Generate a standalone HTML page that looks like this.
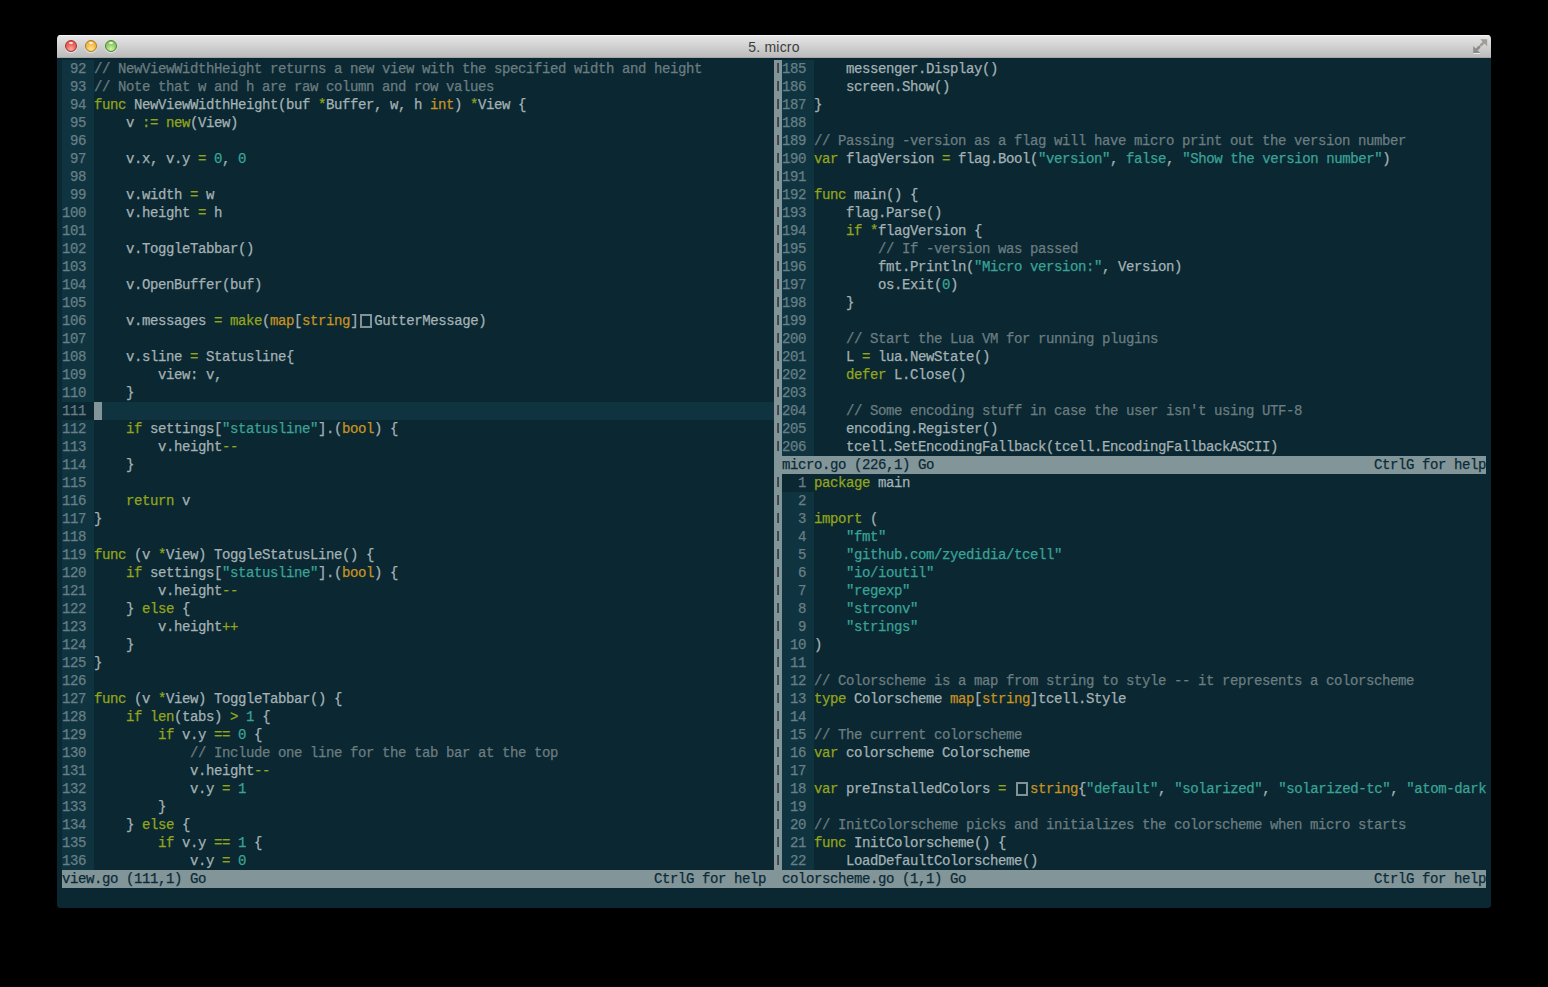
<!DOCTYPE html>
<html><head><meta charset="utf-8"><style>
html,body{margin:0;padding:0;background:#000000;width:1548px;height:987px;overflow:hidden;position:relative}
.win{position:absolute;left:57px;top:35px;width:1434px;height:873px;background:#0a2732;border-radius:4px 4px 3px 3px;overflow:hidden}
.tb{position:absolute;left:0;top:0;width:1434px;height:23px;background:linear-gradient(#e7e7e7,#d3d3d3 45%,#b9b9b9);border-top:0;}
.tb:before{content:"";position:absolute;left:0;top:0;right:0;height:1px;background:#f6f6f6}
.tb:after{content:"";position:absolute;left:0;bottom:0;right:0;height:1px;background:#a8a6a6}
.tt{position:absolute;left:0;top:4px;width:1434px;height:23px;line-height:23px;text-align:center;font:14px "Liberation Sans",sans-serif;letter-spacing:0.2px;color:#3c3c3c}
.btn{position:absolute;top:5px;width:12px;height:12px;border-radius:50%;box-sizing:border-box;border:1px solid;box-shadow:0 1px 1px rgba(255,255,255,0.6)}
.btn:after{content:"";position:absolute;left:3px;top:1px;width:4px;height:2px;border-radius:50%;background:rgba(255,255,255,0.85)}
.btn.r{left:8px;border-color:#a8342c;background:radial-gradient(circle at 50% 80%,#f7b0a8 0,#ec6a62 45%,#e04c44 100%)}
.btn.o{left:28px;border-color:#b07a1c;background:radial-gradient(circle at 50% 80%,#fbe49a 0,#f4c152 45%,#e8a83a 100%)}
.btn.gr{left:48px;border-color:#4a8a2a;background:radial-gradient(circle at 50% 80%,#d6f2b0 0,#98d070 45%,#7cbc56 100%)}
.term{position:absolute;left:0;top:0}
.g,.l,.st{position:absolute;height:18px;line-height:18px;white-space:pre;font-family:"Liberation Mono",monospace;font-size:14px;letter-spacing:-0.4013px;-webkit-text-stroke:0.25px currentColor}
.g{width:32px;background:#0f3440;color:#687f85}
.g.cg{background:#0a2732}
.l{color:#a4b2b4}
.cl{position:absolute;height:18px;background:#0f3440}
.cur{position:absolute;width:8px;height:18px;background:#82969a}
.st{background:#82969a;color:#0b2a36}
.st .r{position:absolute;right:0;top:0}
.dv{position:absolute;width:8px;background:#82969a}
.bar{position:absolute;width:2px;height:10px;background:linear-gradient(90deg,#6a4a40,#1c4462)}
i{font-style:normal}
.bx{display:inline-block;width:16px;height:18px;vertical-align:top;position:relative}
.bx:before{content:"";position:absolute;left:2px;top:2px;width:12px;height:14px;box-sizing:border-box;border:2px solid #a4b2b4;opacity:0.78}
.c{color:#6b7d80}
.s{color:#3aa396}
.k{color:#93a51c}
.t{color:#c8931f}
</style></head><body>
<div class="win">
<div class="tb"></div>
<div class="tt">5. micro</div>
<svg style="position:absolute;left:1415px;top:3px" width="16" height="16" viewBox="1472 38 16 16">
<path d="M1480.2 39.2 L1487.2 39.2 L1487.2 46.2 Z" fill="#a09c96"/>
<path d="M1484 42.2 L1481.2 45" stroke="#a09c96" stroke-width="2.6" stroke-linecap="round"/>
<path d="M1473.2 46 L1473.2 53 L1480.2 53 Z" fill="#8c8c8c"/>
<path d="M1476.4 49.8 L1479.2 47" stroke="#8c8c8c" stroke-width="2.6" stroke-linecap="round"/>
<path d="M1473.5 53.6 L1480 53.6" stroke="#ececec" stroke-width="1"/>
</svg>
<div class="btn r"></div>
<div class="btn o"></div>
<div class="btn gr"></div>
</div>
<div class="term">
<div class="g" style="left:62px;top:60px"> 92 </div>
<div class="l" style="left:94px;top:60px"><i class="c">// NewViewWidthHeight returns a new view with the specified width and height</i></div>
<div class="g" style="left:62px;top:78px"> 93 </div>
<div class="l" style="left:94px;top:78px"><i class="c">// Note that w and h are raw column and row values</i></div>
<div class="g" style="left:62px;top:96px"> 94 </div>
<div class="l" style="left:94px;top:96px"><i class="k">func</i> NewViewWidthHeight(buf <i class="k">*</i>Buffer, w, h <i class="t">int</i>) <i class="k">*</i>View {</div>
<div class="g" style="left:62px;top:114px"> 95 </div>
<div class="l" style="left:94px;top:114px">    v <i class="k">:=</i> <i class="k">new</i>(View)</div>
<div class="g" style="left:62px;top:132px"> 96 </div>
<div class="g" style="left:62px;top:150px"> 97 </div>
<div class="l" style="left:94px;top:150px">    v.x, v.y <i class="k">=</i> <i class="s">0</i>, <i class="s">0</i></div>
<div class="g" style="left:62px;top:168px"> 98 </div>
<div class="g" style="left:62px;top:186px"> 99 </div>
<div class="l" style="left:94px;top:186px">    v.width <i class="k">=</i> w</div>
<div class="g" style="left:62px;top:204px">100 </div>
<div class="l" style="left:94px;top:204px">    v.height <i class="k">=</i> h</div>
<div class="g" style="left:62px;top:222px">101 </div>
<div class="g" style="left:62px;top:240px">102 </div>
<div class="l" style="left:94px;top:240px">    v.ToggleTabbar()</div>
<div class="g" style="left:62px;top:258px">103 </div>
<div class="g" style="left:62px;top:276px">104 </div>
<div class="l" style="left:94px;top:276px">    v.OpenBuffer(buf)</div>
<div class="g" style="left:62px;top:294px">105 </div>
<div class="g" style="left:62px;top:312px">106 </div>
<div class="l" style="left:94px;top:312px">    v.messages <i class="k">=</i> <i class="k">make</i>(<i class="t">map</i>[<i class="t">string</i>]<i class="bx"></i>GutterMessage)</div>
<div class="g" style="left:62px;top:330px">107 </div>
<div class="g" style="left:62px;top:348px">108 </div>
<div class="l" style="left:94px;top:348px">    v.sline <i class="k">=</i> Statusline{</div>
<div class="g" style="left:62px;top:366px">109 </div>
<div class="l" style="left:94px;top:366px">        view: v,</div>
<div class="g" style="left:62px;top:384px">110 </div>
<div class="l" style="left:94px;top:384px">    }</div>
<div class="g cg" style="left:62px;top:402px">111 </div>
<div class="cl" style="left:94px;top:402px;width:680px"></div>
<div class="cur" style="left:94px;top:402px"></div>
<div class="g" style="left:62px;top:420px">112 </div>
<div class="l" style="left:94px;top:420px">    <i class="k">if</i> settings[<i class="s">&quot;statusline&quot;</i>].(<i class="t">bool</i>) {</div>
<div class="g" style="left:62px;top:438px">113 </div>
<div class="l" style="left:94px;top:438px">        v.height<i class="k">--</i></div>
<div class="g" style="left:62px;top:456px">114 </div>
<div class="l" style="left:94px;top:456px">    }</div>
<div class="g" style="left:62px;top:474px">115 </div>
<div class="g" style="left:62px;top:492px">116 </div>
<div class="l" style="left:94px;top:492px">    <i class="k">return</i> v</div>
<div class="g" style="left:62px;top:510px">117 </div>
<div class="l" style="left:94px;top:510px">}</div>
<div class="g" style="left:62px;top:528px">118 </div>
<div class="g" style="left:62px;top:546px">119 </div>
<div class="l" style="left:94px;top:546px"><i class="k">func</i> (v <i class="k">*</i>View) ToggleStatusLine() {</div>
<div class="g" style="left:62px;top:564px">120 </div>
<div class="l" style="left:94px;top:564px">    <i class="k">if</i> settings[<i class="s">&quot;statusline&quot;</i>].(<i class="t">bool</i>) {</div>
<div class="g" style="left:62px;top:582px">121 </div>
<div class="l" style="left:94px;top:582px">        v.height<i class="k">--</i></div>
<div class="g" style="left:62px;top:600px">122 </div>
<div class="l" style="left:94px;top:600px">    } <i class="k">else</i> {</div>
<div class="g" style="left:62px;top:618px">123 </div>
<div class="l" style="left:94px;top:618px">        v.height<i class="k">++</i></div>
<div class="g" style="left:62px;top:636px">124 </div>
<div class="l" style="left:94px;top:636px">    }</div>
<div class="g" style="left:62px;top:654px">125 </div>
<div class="l" style="left:94px;top:654px">}</div>
<div class="g" style="left:62px;top:672px">126 </div>
<div class="g" style="left:62px;top:690px">127 </div>
<div class="l" style="left:94px;top:690px"><i class="k">func</i> (v <i class="k">*</i>View) ToggleTabbar() {</div>
<div class="g" style="left:62px;top:708px">128 </div>
<div class="l" style="left:94px;top:708px">    <i class="k">if</i> <i class="k">len</i>(tabs) <i class="k">&gt;</i> <i class="s">1</i> {</div>
<div class="g" style="left:62px;top:726px">129 </div>
<div class="l" style="left:94px;top:726px">        <i class="k">if</i> v.y <i class="k">==</i> <i class="s">0</i> {</div>
<div class="g" style="left:62px;top:744px">130 </div>
<div class="l" style="left:94px;top:744px">            <i class="c">// Include one line for the tab bar at the top</i></div>
<div class="g" style="left:62px;top:762px">131 </div>
<div class="l" style="left:94px;top:762px">            v.height<i class="k">--</i></div>
<div class="g" style="left:62px;top:780px">132 </div>
<div class="l" style="left:94px;top:780px">            v.y <i class="k">=</i> <i class="s">1</i></div>
<div class="g" style="left:62px;top:798px">133 </div>
<div class="l" style="left:94px;top:798px">        }</div>
<div class="g" style="left:62px;top:816px">134 </div>
<div class="l" style="left:94px;top:816px">    } <i class="k">else</i> {</div>
<div class="g" style="left:62px;top:834px">135 </div>
<div class="l" style="left:94px;top:834px">        <i class="k">if</i> v.y <i class="k">==</i> <i class="s">1</i> {</div>
<div class="g" style="left:62px;top:852px">136 </div>
<div class="l" style="left:94px;top:852px">            v.y <i class="k">=</i> <i class="s">0</i></div>
<div class="g" style="left:782px;top:60px">185 </div>
<div class="l" style="left:814px;top:60px">    messenger.Display()</div>
<div class="g" style="left:782px;top:78px">186 </div>
<div class="l" style="left:814px;top:78px">    screen.Show()</div>
<div class="g" style="left:782px;top:96px">187 </div>
<div class="l" style="left:814px;top:96px">}</div>
<div class="g" style="left:782px;top:114px">188 </div>
<div class="g" style="left:782px;top:132px">189 </div>
<div class="l" style="left:814px;top:132px"><i class="c">// Passing -version as a flag will have micro print out the version number</i></div>
<div class="g" style="left:782px;top:150px">190 </div>
<div class="l" style="left:814px;top:150px"><i class="k">var</i> flagVersion <i class="k">=</i> flag.Bool(<i class="s">&quot;version&quot;</i>, <i class="s">false</i>, <i class="s">&quot;Show the version number&quot;</i>)</div>
<div class="g" style="left:782px;top:168px">191 </div>
<div class="g" style="left:782px;top:186px">192 </div>
<div class="l" style="left:814px;top:186px"><i class="k">func</i> main() {</div>
<div class="g" style="left:782px;top:204px">193 </div>
<div class="l" style="left:814px;top:204px">    flag.Parse()</div>
<div class="g" style="left:782px;top:222px">194 </div>
<div class="l" style="left:814px;top:222px">    <i class="k">if</i> <i class="k">*</i>flagVersion {</div>
<div class="g" style="left:782px;top:240px">195 </div>
<div class="l" style="left:814px;top:240px">        <i class="c">// If -version was passed</i></div>
<div class="g" style="left:782px;top:258px">196 </div>
<div class="l" style="left:814px;top:258px">        fmt.Println(<i class="s">&quot;Micro version:&quot;</i>, Version)</div>
<div class="g" style="left:782px;top:276px">197 </div>
<div class="l" style="left:814px;top:276px">        os.Exit(<i class="s">0</i>)</div>
<div class="g" style="left:782px;top:294px">198 </div>
<div class="l" style="left:814px;top:294px">    }</div>
<div class="g" style="left:782px;top:312px">199 </div>
<div class="g" style="left:782px;top:330px">200 </div>
<div class="l" style="left:814px;top:330px">    <i class="c">// Start the Lua VM for running plugins</i></div>
<div class="g" style="left:782px;top:348px">201 </div>
<div class="l" style="left:814px;top:348px">    L <i class="k">=</i> lua.NewState()</div>
<div class="g" style="left:782px;top:366px">202 </div>
<div class="l" style="left:814px;top:366px">    <i class="k">defer</i> L.Close()</div>
<div class="g" style="left:782px;top:384px">203 </div>
<div class="g" style="left:782px;top:402px">204 </div>
<div class="l" style="left:814px;top:402px">    <i class="c">// Some encoding stuff in case the user isn&#x27;t using UTF-8</i></div>
<div class="g" style="left:782px;top:420px">205 </div>
<div class="l" style="left:814px;top:420px">    encoding.Register()</div>
<div class="g" style="left:782px;top:438px">206 </div>
<div class="l" style="left:814px;top:438px">    tcell.SetEncodingFallback(tcell.EncodingFallbackASCII)</div>
<div class="g cg" style="left:782px;top:474px">  1 </div>
<div class="l" style="left:814px;top:474px"><i class="k">package</i> main</div>
<div class="g" style="left:782px;top:492px">  2 </div>
<div class="g" style="left:782px;top:510px">  3 </div>
<div class="l" style="left:814px;top:510px"><i class="k">import</i> (</div>
<div class="g" style="left:782px;top:528px">  4 </div>
<div class="l" style="left:814px;top:528px">    <i class="s">&quot;fmt&quot;</i></div>
<div class="g" style="left:782px;top:546px">  5 </div>
<div class="l" style="left:814px;top:546px">    <i class="s">&quot;github.com/zyedidia/tcell&quot;</i></div>
<div class="g" style="left:782px;top:564px">  6 </div>
<div class="l" style="left:814px;top:564px">    <i class="s">&quot;io/ioutil&quot;</i></div>
<div class="g" style="left:782px;top:582px">  7 </div>
<div class="l" style="left:814px;top:582px">    <i class="s">&quot;regexp&quot;</i></div>
<div class="g" style="left:782px;top:600px">  8 </div>
<div class="l" style="left:814px;top:600px">    <i class="s">&quot;strconv&quot;</i></div>
<div class="g" style="left:782px;top:618px">  9 </div>
<div class="l" style="left:814px;top:618px">    <i class="s">&quot;strings&quot;</i></div>
<div class="g" style="left:782px;top:636px"> 10 </div>
<div class="l" style="left:814px;top:636px">)</div>
<div class="g" style="left:782px;top:654px"> 11 </div>
<div class="g" style="left:782px;top:672px"> 12 </div>
<div class="l" style="left:814px;top:672px"><i class="c">// Colorscheme is a map from string to style -- it represents a colorscheme</i></div>
<div class="g" style="left:782px;top:690px"> 13 </div>
<div class="l" style="left:814px;top:690px"><i class="k">type</i> Colorscheme <i class="t">map</i>[<i class="t">string</i>]tcell.Style</div>
<div class="g" style="left:782px;top:708px"> 14 </div>
<div class="g" style="left:782px;top:726px"> 15 </div>
<div class="l" style="left:814px;top:726px"><i class="c">// The current colorscheme</i></div>
<div class="g" style="left:782px;top:744px"> 16 </div>
<div class="l" style="left:814px;top:744px"><i class="k">var</i> colorscheme Colorscheme</div>
<div class="g" style="left:782px;top:762px"> 17 </div>
<div class="g" style="left:782px;top:780px"> 18 </div>
<div class="l" style="left:814px;top:780px"><i class="k">var</i> preInstalledColors <i class="k">=</i> <i class="bx"></i><i class="t">string</i>{<i class="s">&quot;default&quot;</i>, <i class="s">&quot;solarized&quot;</i>, <i class="s">&quot;solarized-tc&quot;</i>, <i class="s">&quot;atom-dark</i></div>
<div class="g" style="left:782px;top:798px"> 19 </div>
<div class="g" style="left:782px;top:816px"> 20 </div>
<div class="l" style="left:814px;top:816px"><i class="c">// InitColorscheme picks and initializes the colorscheme when micro starts</i></div>
<div class="g" style="left:782px;top:834px"> 21 </div>
<div class="l" style="left:814px;top:834px"><i class="k">func</i> InitColorscheme() {</div>
<div class="g" style="left:782px;top:852px"> 22 </div>
<div class="l" style="left:814px;top:852px">    LoadDefaultColorscheme()</div>
<div class="st" style="left:62px;top:870px;width:712px"><span>view.go (111,1) Go</span><span class="r">CtrlG for help </span></div>
<div class="st" style="left:782px;top:456px;width:704px"><span>micro.go (226,1) Go</span><span class="r">CtrlG for help</span></div>
<div class="st" style="left:782px;top:870px;width:704px"><span>colorscheme.go (1,1) Go</span><span class="r">CtrlG for help</span></div>
<div class="dv" style="left:774px;top:60px;height:828px"></div>
<div class="bar" style="left:777px;top:63px"></div>
<div class="bar" style="left:777px;top:81px"></div>
<div class="bar" style="left:777px;top:99px"></div>
<div class="bar" style="left:777px;top:117px"></div>
<div class="bar" style="left:777px;top:135px"></div>
<div class="bar" style="left:777px;top:153px"></div>
<div class="bar" style="left:777px;top:171px"></div>
<div class="bar" style="left:777px;top:189px"></div>
<div class="bar" style="left:777px;top:207px"></div>
<div class="bar" style="left:777px;top:225px"></div>
<div class="bar" style="left:777px;top:243px"></div>
<div class="bar" style="left:777px;top:261px"></div>
<div class="bar" style="left:777px;top:279px"></div>
<div class="bar" style="left:777px;top:297px"></div>
<div class="bar" style="left:777px;top:315px"></div>
<div class="bar" style="left:777px;top:333px"></div>
<div class="bar" style="left:777px;top:351px"></div>
<div class="bar" style="left:777px;top:369px"></div>
<div class="bar" style="left:777px;top:387px"></div>
<div class="bar" style="left:777px;top:405px"></div>
<div class="bar" style="left:777px;top:423px"></div>
<div class="bar" style="left:777px;top:441px"></div>
<div class="bar" style="left:777px;top:477px"></div>
<div class="bar" style="left:777px;top:495px"></div>
<div class="bar" style="left:777px;top:513px"></div>
<div class="bar" style="left:777px;top:531px"></div>
<div class="bar" style="left:777px;top:549px"></div>
<div class="bar" style="left:777px;top:567px"></div>
<div class="bar" style="left:777px;top:585px"></div>
<div class="bar" style="left:777px;top:603px"></div>
<div class="bar" style="left:777px;top:621px"></div>
<div class="bar" style="left:777px;top:639px"></div>
<div class="bar" style="left:777px;top:657px"></div>
<div class="bar" style="left:777px;top:675px"></div>
<div class="bar" style="left:777px;top:693px"></div>
<div class="bar" style="left:777px;top:711px"></div>
<div class="bar" style="left:777px;top:729px"></div>
<div class="bar" style="left:777px;top:747px"></div>
<div class="bar" style="left:777px;top:765px"></div>
<div class="bar" style="left:777px;top:783px"></div>
<div class="bar" style="left:777px;top:801px"></div>
<div class="bar" style="left:777px;top:819px"></div>
<div class="bar" style="left:777px;top:837px"></div>
<div class="bar" style="left:777px;top:855px"></div>
</div>
</body></html>
